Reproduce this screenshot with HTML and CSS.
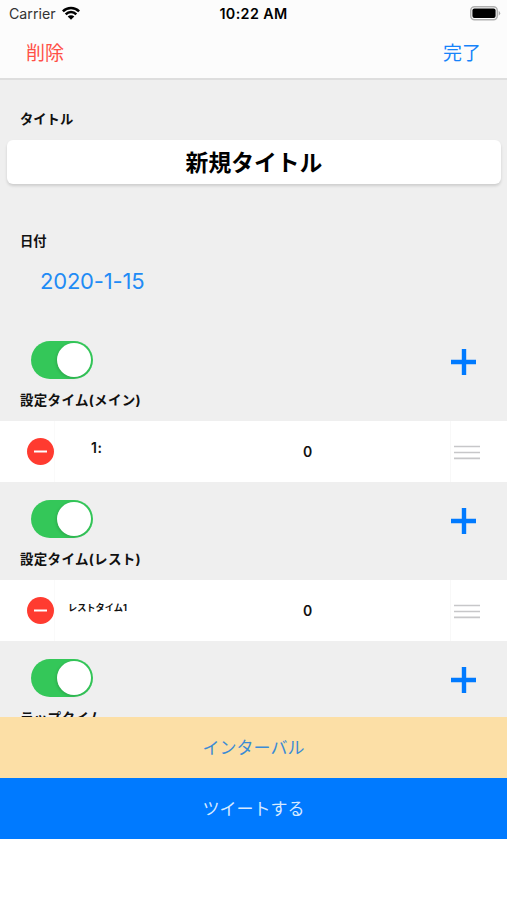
FILE: index.html
```
<!DOCTYPE html>
<html lang="ja">
<head>
    <meta charset="UTF-8">
    <meta name="viewport" content="width=device-width, initial-scale=1.0">
    <title>新規タイトル</title>
    <link rel="stylesheet" href="styles.css">
</head>
<body>
    <header class="header">
        <div class="status-bar">
            <div class="carrier">
                <span>Carrier</span>
                <svg class="wifi" width="18" height="14" viewBox="0 0 18 14">
                    <path d="M.9 5.3a11.4 11.4 0 0 1 16.2 0M3.7 8.3a7.4 7.4 0 0 1 10.6 0" fill="none" stroke="#000" stroke-width="2.5"/>
                    <path d="M9 13.8L5.7 10.6a4.7 4.7 0 0 1 6.6 0z"/>
                </svg>
            </div>
            <span class="clock">10:22 AM</span>
            <svg class="battery" width="31" height="15" viewBox="0 0 31 15">
                <rect x="0.75" y="0.75" width="26.5" height="13" rx="3.8" fill="#fff" stroke="#b0b0b0" stroke-width="1.5"/>
                <rect x="2.4" y="2.6" width="23.2" height="9.4" rx="2"/>
                <path d="M28.7 4.8q3 2.4 0 4.9z" fill="#aaa"/>
            </svg>
        </div>
        <nav class="nav">
            <a class="delete">削除</a>
            <a class="done">完了</a>
        </nav>
    </header>

    <main class="content">
        <h2 class="label title-label">タイトル</h2>
        <div class="title-box">新規タイトル</div>
        <h2 class="label date-label">日付</h2>
        <a class="date">2020-1-15</a>

        <!-- メイン -->
        <div class="section">
            <div>
                <div class="switch"></div>
                <h2 class="label section-label">設定タイム(メイン)</h2>
            </div>
            <svg class="plus" width="25" height="26" viewBox="0 0 25 26"><path d="M0 13h25M13 0v26"/></svg>
        </div>
        <div class="row">
            <svg class="minus" width="27" height="27" viewBox="0 0 27 27"><circle cx="13.5" cy="13.5" r="13.5"/><path d="M7 13.5h13"/></svg>
            <div class="cell">
                <span class="name name-main">1:</span>
                <span class="value">0</span>
            </div>
            <svg class="handle" width="26" height="15" viewBox="0 0 26 15"><path d="M0 1.5h26M0 7.5h26M0 13.3h26"/></svg>
        </div>

        <!-- レスト -->
        <div class="section">
            <div>
                <div class="switch"></div>
                <h2 class="label section-label">設定タイム(レスト)</h2>
            </div>
            <svg class="plus" width="25" height="26" viewBox="0 0 25 26"><path d="M0 13h25M13 0v26"/></svg>
        </div>
        <div class="row">
            <svg class="minus" width="27" height="27" viewBox="0 0 27 27"><circle cx="13.5" cy="13.5" r="13.5"/><path d="M7 13.5h13"/></svg>
            <div class="cell">
                <span class="name name-rest">レストタイム1</span>
                <span class="value">0</span>
            </div>
            <svg class="handle" width="26" height="15" viewBox="0 0 26 15"><path d="M0 1.5h26M0 7.5h26M0 13.3h26"/></svg>
        </div>

        <!-- ラップ -->
        <div class="section">
            <div>
                <div class="switch"></div>
                <h2 class="label section-label">ラップタイム</h2>
            </div>
            <svg class="plus" width="25" height="26" viewBox="0 0 25 26"><path d="M0 13h25M13 0v26"/></svg>
        </div>
    </main>

    <footer class="footer">
        <a class="button interval">インターバル</a>
        <a class="button tweet">ツイートする</a>
    </footer>
</body>
</html>
```
FILE: styles.css
```
* {
    box-sizing: border-box;
}
body {
    display: flex;
    flex-direction: column;
    height: 900px;
    margin: 0;
    font-family: Inter, "Noto Sans CJK JP", sans-serif;
    color: #111;
    background-color: #fff;
    overflow: hidden;
}
.header {
    flex: none;
    height: 80px;
    background-color: #fcfcfc;
    border-bottom: 2px solid #dedede;
}
.status-bar {
    display: grid;
    grid-template-columns: 1fr auto 1fr;
    align-items: center;
    height: 27px;
    padding: 0 6px 0 9px;
    font-size: 14px;
    line-height: 27px;
}
.carrier {
    display: flex;
    align-items: center;
    gap: 6px;
    font-size: 14.2px;
    color: #333;
}
.wifi {
    margin-top: -2px;
}
.clock {
    margin-right: 3px;
    font-weight: 600;
    font-size: 14.3px;
    letter-spacing: 0.4px;
    color: #000;
}
.battery {
    justify-self: end;
}
.nav {
    display: flex;
    justify-content: space-between;
    padding: 13px 26px 0;
    font-size: 19px;
    line-height: 28px;
}
.delete {
    color: #ff5147;
}
.done {
    color: #1683fa;
}
.content {
    flex: none;
    height: 637px;
    background-color: #efefef;
    overflow: hidden;
}
.label {
    margin: 0;
    font-size: 13.3px;
    font-weight: 700;
    line-height: 20px;
}
.title-label {
    padding: 29px 20px 0;
}
.title-box {
    height: 44px;
    margin: 11px 6px 0 7px;
    font-size: 22.8px;
    font-weight: 700;
    line-height: 46px;
    text-align: center;
    color: #000;
    background-color: #fff;
    border-radius: 6px;
    box-shadow: 0 2px 3px rgba(0, 0, 0, 0.14);
}
.date-label {
    padding: 47px 20px 0;
}
.date {
    display: block;
    height: 72px;
    padding: 15px 40px 0;
    font-size: 22px;
    line-height: 30px;
    letter-spacing: -0.2px;
    color: #1f8bf5;
}
.section {
    display: flex;
    justify-content: space-between;
    height: 98px;
    padding: 18px 31px 0 20px;
}
.section-label {
    font-size: 13.5px;
    letter-spacing: 0.3px;
}
.switch {
    width: 62px;
    height: 38px;
    margin: 0 0 11px 11px;
    padding: 2px;
    background-color: #34c759;
    border-radius: 19px;
}
.switch::after {
    content: "";
    display: block;
    width: 34px;
    height: 34px;
    margin-left: auto;
    background-color: #fff;
    border-radius: 50%;
    box-shadow: -1px 1px 3px rgba(0, 0, 0, 0.15);
}
.plus {
    margin-top: 8px;
    fill: none;
    stroke: #007aff;
    stroke-width: 4.4;
}
.row {
    display: flex;
    align-items: center;
    height: 61px;
    padding: 0 27px;
    background-color: #fff;
}
.minus {
    fill: #ff3b30;
}
.minus path {
    stroke: #fff;
    stroke-width: 2;
}
.cell {
    display: flex;
    flex: 1;
    height: 61px;
    margin-right: 3px;
    border-left: 1px solid #fafafa;
    border-right: 1px solid #f8f8f8;
    font-size: 14px;
    font-weight: 600;
    line-height: 20px;
}
.name {
    width: 248px;
    padding-top: 17px;
}
.name-main {
    padding-left: 36px;
    letter-spacing: 0.5px;
}
.name-rest {
    padding-top: 18px;
    padding-left: 13px;
    font-size: 9.2px;
    font-weight: 700;
}
.value {
    padding-top: 21px;
}
.handle {
    margin-top: 1px;
    fill: none;
    stroke: #c7c7c9;
    stroke-width: 1.7;
}
.footer {
    font-size: 17px;
    line-height: 63px;
    text-align: center;
}
.button {
    display: block;
    height: 61px;
}
.interval {
    color: #3b8bd5;
    background-color: #fcdfa6;
}
.tweet {
    color: #d6e9ff;
    background-color: #007aff;
}
```
